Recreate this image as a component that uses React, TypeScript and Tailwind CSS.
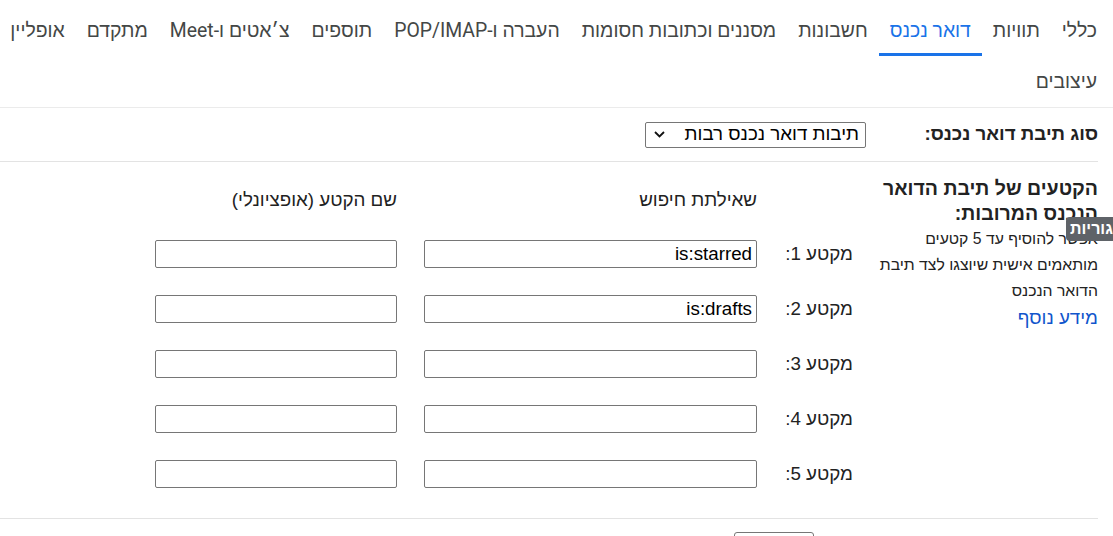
import React from 'react';

const tabRows = [
  [
    'כללי',
    'תוויות',
    'דואר נכנס',
    'חשבונות',
    'מסננים וכתובות חסומות',
    'העברה ו-POP/IMAP',
    'תוספים',
    'צ׳אטים ו-Meet',
    'מתקדם',
    'אופליין',
  ],
  ['עיצובים'],
];

const segments = [
  { id: 1, query: 'is:starred' },
  { id: 2, query: 'is:drafts' },
  { id: 3, query: '' },
  { id: 4, query: '' },
  { id: 5, query: '' },
];

const Chevron = () => (
  <svg width="11" height="7" viewBox="0 0 11 7" fill="none">
    <path d="M1 1l4.5 4.5L10 1" stroke="#111" strokeWidth="1.8" />
  </svg>
);

const App = () => {
  return (
    <div
      dir="rtl"
      className="relative w-full h-[536px] overflow-hidden bg-white text-[#222]"
      style={{ fontFamily: '"Liberation Sans", Arial, sans-serif' }}
    >
      {/* טאבים */}
      <nav
        className="flex flex-col pr-[5px] pt-[5px] border-b border-[#ebebeb] text-[19.4px] text-[#444746]"
        style={{ fontFamily: 'Roboto, "Liberation Sans", Arial, sans-serif' }}
      >
        {tabRows.map((row, i) => (
          <div key={i} className="flex">
            {row.map((tab) => (
              <div
                key={tab}
                className={
                  tab === 'דואר נכנס'
                    ? 'relative h-[51px] px-[11px] flex items-center whitespace-nowrap text-[#1a73e8]'
                    : 'relative h-[51px] px-[11px] flex items-center whitespace-nowrap'
                }
              >
                {tab}
                {tab === 'דואר נכנס' && (
                  <span className="absolute bottom-0 left-0 right-0 h-[3px] bg-[#1a73e8]" />
                )}
              </div>
            ))}
          </div>
        ))}
      </nav>

      <div className="pr-[15px]">
        {/* סוג תיבת דואר נכנס */}
        <div className="flex items-center h-[54px] border-b border-[#e3e3e3]">
          <div className="w-[232px] font-bold text-[18.75px]">סוג תיבת דואר נכנס:</div>
          <div className="w-[221px] h-[26px] border border-[#767676] rounded-[2px] flex items-center justify-between pr-[6px] pl-[8px] text-[18.75px] text-black">
            <span>תיבות דואר נכנס רבות</span>
            <Chevron />
          </div>
        </div>

        {/* קטעים */}
        <div className="flex h-[357px] border-b border-[#e3e3e3]">
          <div className="w-[222px] pt-[14px]">
            <div className="font-bold text-[19.5px] leading-[25px]">
              הקטעים של תיבת הדואר הנכנס המרובות:
            </div>
            <div className="text-[15.75px] leading-[26px]">
              אפשר להוסיף עד 5 קטעים מותאמים אישית שיוצגו לצד תיבת הדואר הנכנס
            </div>
            <a className="block text-[18.75px] leading-[28px] text-[#1155cc]">מידע נוסף</a>
          </div>

          <div className="pr-[23px] text-[18.75px]">
            <div className="flex mt-[26px] h-[24px] items-center">
              <div className="w-[96px]" />
              <div className="w-[333px]">שאילתת חיפוש</div>
              <div className="w-[27px]" />
              <div className="w-[242px]">שם הקטע (אופציונלי)</div>
            </div>
            <div className="flex flex-col gap-[27px] mt-[28px]">
              {segments.map((s) => (
                <div key={s.id} className="flex items-center h-[28px]">
                  <div className="w-[96px]">מקטע {s.id}:</div>
                  <div className="w-[333px] h-[28px] border border-[#767676] rounded-[2px] flex items-center px-[4px] text-black">
                    {s.query}
                  </div>
                  <div className="w-[27px]" />
                  <div className="w-[242px] h-[28px] border border-[#767676] rounded-[2px]" />
                </div>
              ))}
            </div>
          </div>
        </div>

        <div className="pt-[13px] pr-[284px]">
          <button className="w-[80px] h-[34px] border border-[#767676] rounded-[3px] text-[15px]">
            ביטול
          </button>
        </div>
      </div>

      {/* טולטיפ */}
      <div className="absolute left-[1066px] top-[217px] h-[24px] flex items-center px-[4px] rounded-[4px] bg-[#5f6368] text-white text-[16px] font-bold whitespace-nowrap">
        קטגוריות
      </div>
    </div>
  );
};

export default App;
